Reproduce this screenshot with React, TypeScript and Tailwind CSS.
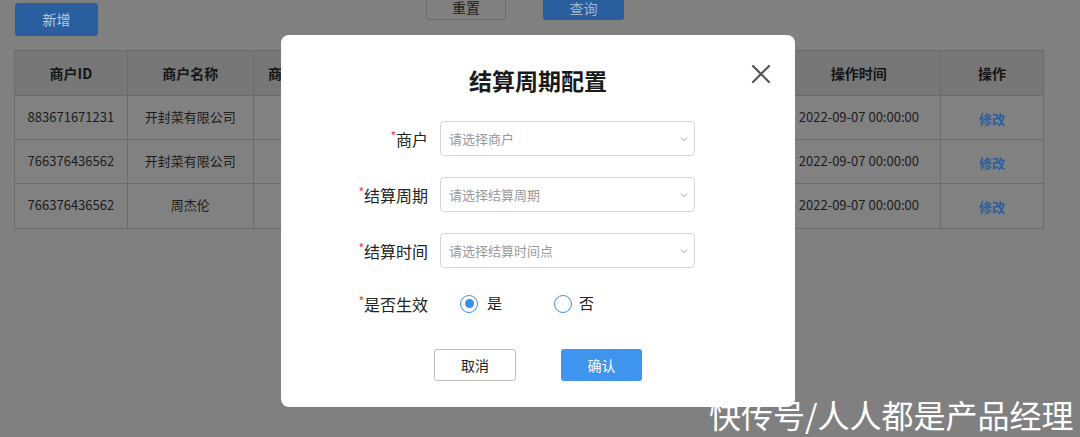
import React from 'react';

const font = { fontFamily: '"Noto Sans CJK SC", "Noto Sans", sans-serif' };

const rows = [
  { id: '883671671231', name: '开封菜有限公司' },
  { id: '766376436562', name: '开封菜有限公司' },
  { id: '766376436562', name: '周杰伦' },
];

const cols = [
  { title: '商户ID', w: 'w-[113px]' },
  { title: '商户名称', w: 'w-[126px]' },
  { title: '商户类型', w: 'w-[86px]' },
  { title: '结算周期', w: 'w-[147px]' },
  { title: '结算时间', w: 'w-[146px]' },
  { title: '是否生效', w: 'w-[146px]' },
  { title: '操作时间', w: 'w-[164px]' },
  { title: '操作', w: 'w-[102px]' },
];

const Chevron = () => (
  <svg width="10" height="10" viewBox="0 0 10 10" className="text-gray-400">
    <path d="M2 3.5 L5 6.5 L8 3.5" fill="none" stroke="currentColor" strokeWidth="1" />
  </svg>
);

const Label: React.FC<{ text: string }> = ({ text }) => (
  <div className="w-[159px] pr-[12px] text-right text-[16px] text-[#222]">
    <span className="text-[#e0393e] text-[12px] align-top">*</span>
    {text}
  </div>
);

const Field: React.FC<{ label: string; placeholder: string }> = ({ label, placeholder }) => (
  <div className="flex items-center h-[35px]">
    <Label text={label} />
    <div className="w-[255px] h-[35px] border border-[#d6d6d6] rounded-[4px] flex items-center justify-between pl-[8px] pr-[5px]">
      <span className="text-[13px] text-[#9a9a9a]">{placeholder}</span>
      <Chevron />
    </div>
  </div>
);

const App: React.FC = () => {
  return (
    <div className="relative w-[1080px] h-[437px] overflow-hidden bg-[#808080]" style={font}>
      {/* page under the mask */}
      <div className="flex items-start">
        <div className="ml-[15px] mt-[3px] w-[83px] h-[33px] rounded-[3px] bg-[#2a5f9f] flex items-center justify-center text-[14px] text-[#b9c8dc]">
          新增
        </div>
        <div className="ml-[328px] -mt-[12px] w-[80px] h-[32px] rounded-[3px] border border-[#6a6a6a] flex items-end justify-center pb-[2px] text-[14px] leading-[20px] text-[#222]">
          重置
        </div>
        <div className="ml-[37px] -mt-[12px] w-[81px] h-[32px] rounded-[3px] bg-[#2a5f9f] flex items-end justify-center pb-[2px] text-[14px] leading-[20px] text-[#9fb4cf]">
          查询
        </div>
      </div>

      <div className="ml-[14px] mt-[14px] w-[1030px] border border-[#6c6c6c]">
        <div className="flex h-[45px] bg-[#777777] border-b border-[#6c6c6c]">
          {cols.map((c, i) => (
            <div
              key={c.title}
              className={`${c.w} flex items-center justify-center text-[14px] font-bold text-[#151515] whitespace-nowrap ${i < cols.length - 1 ? 'border-r border-[#6c6c6c]' : ''}`}
            >
              {c.title}
            </div>
          ))}
        </div>
        {rows.map((r, ri) => (
          <div key={ri} className={`flex h-[44px] bg-[#818181] ${ri < rows.length - 1 ? 'border-b border-[#6c6c6c]' : ''}`}>
            {[r.id, r.name, '', '', '', '', '2022-09-07 00:00:00', '修改'].map((v, i) => (
              <div
                key={i}
                className={`${cols[i].w} flex items-center justify-center text-[13px] ${i === 7 ? 'text-[#2b5e9e] font-bold pt-[2px]' : 'text-[#1c1c1c] pb-[2px]'} ${i < cols.length - 1 ? 'border-r border-[#6c6c6c]' : ''}`}
              >
                {v}
              </div>
            ))}
          </div>
        ))}
      </div>

      {/* dialog */}
      <div className="absolute left-[281px] top-[35px] w-[514px] h-[372px] bg-white rounded-[8px]">
        <div className="relative h-[92px]">
          <div className="pt-[29px] text-center text-[23px] leading-[32px] font-bold text-[#1a1a1a]">结算周期配置</div>
          <svg className="absolute right-[24px] top-[29px]" width="20" height="20" viewBox="0 0 20 20">
            <path d="M2 2 L18 18 M18 2 L2 18" stroke="#555" strokeWidth="2.2" strokeLinecap="round" />
          </svg>
        </div>
        <div className="flex flex-col gap-[21px] -mt-[6px]">
          <Field label="商户" placeholder="请选择商户" />
          <Field label="结算周期" placeholder="请选择结算周期" />
          <Field label="结算时间" placeholder="请选择结算时间点" />
          <div className="flex items-center h-[35px] -mt-[3px]">
            <Label text="是否生效" />
            <div className="ml-[20px] flex items-center gap-[9px]">
              <span className="w-[18px] h-[18px] rounded-full border-[1.5px] border-[#3a8ee6] flex items-center justify-center">
                <span className="w-[9px] h-[9px] rounded-full bg-[#3a8ee6]" />
              </span>
              <span className="text-[15px] text-[#222]">是</span>
            </div>
            <div className="ml-[52px] flex items-center gap-[7px]">
              <span className="w-[18px] h-[18px] rounded-full border-[1.5px] border-[#3a8ee6]" />
              <span className="text-[15px] text-[#222]">否</span>
            </div>
          </div>
        </div>
        <div className="flex mt-[28px] ml-[153px] gap-[45px]">
          <div className="w-[82px] h-[32px] rounded-[3px] border border-[#bdbdbd] flex items-center justify-center text-[14px] text-[#222]">
            取消
          </div>
          <div className="w-[81px] h-[32px] rounded-[3px] bg-[#3f94ee] flex items-center justify-center text-[14px] text-white">
            确认
          </div>
        </div>
      </div>

      {/* watermark */}
      <div className="absolute left-[709px] top-[393px] text-[32px] leading-[42px] text-white whitespace-nowrap">
        快传号/人人都是产品经理
      </div>
    </div>
  );
};

export default App;
